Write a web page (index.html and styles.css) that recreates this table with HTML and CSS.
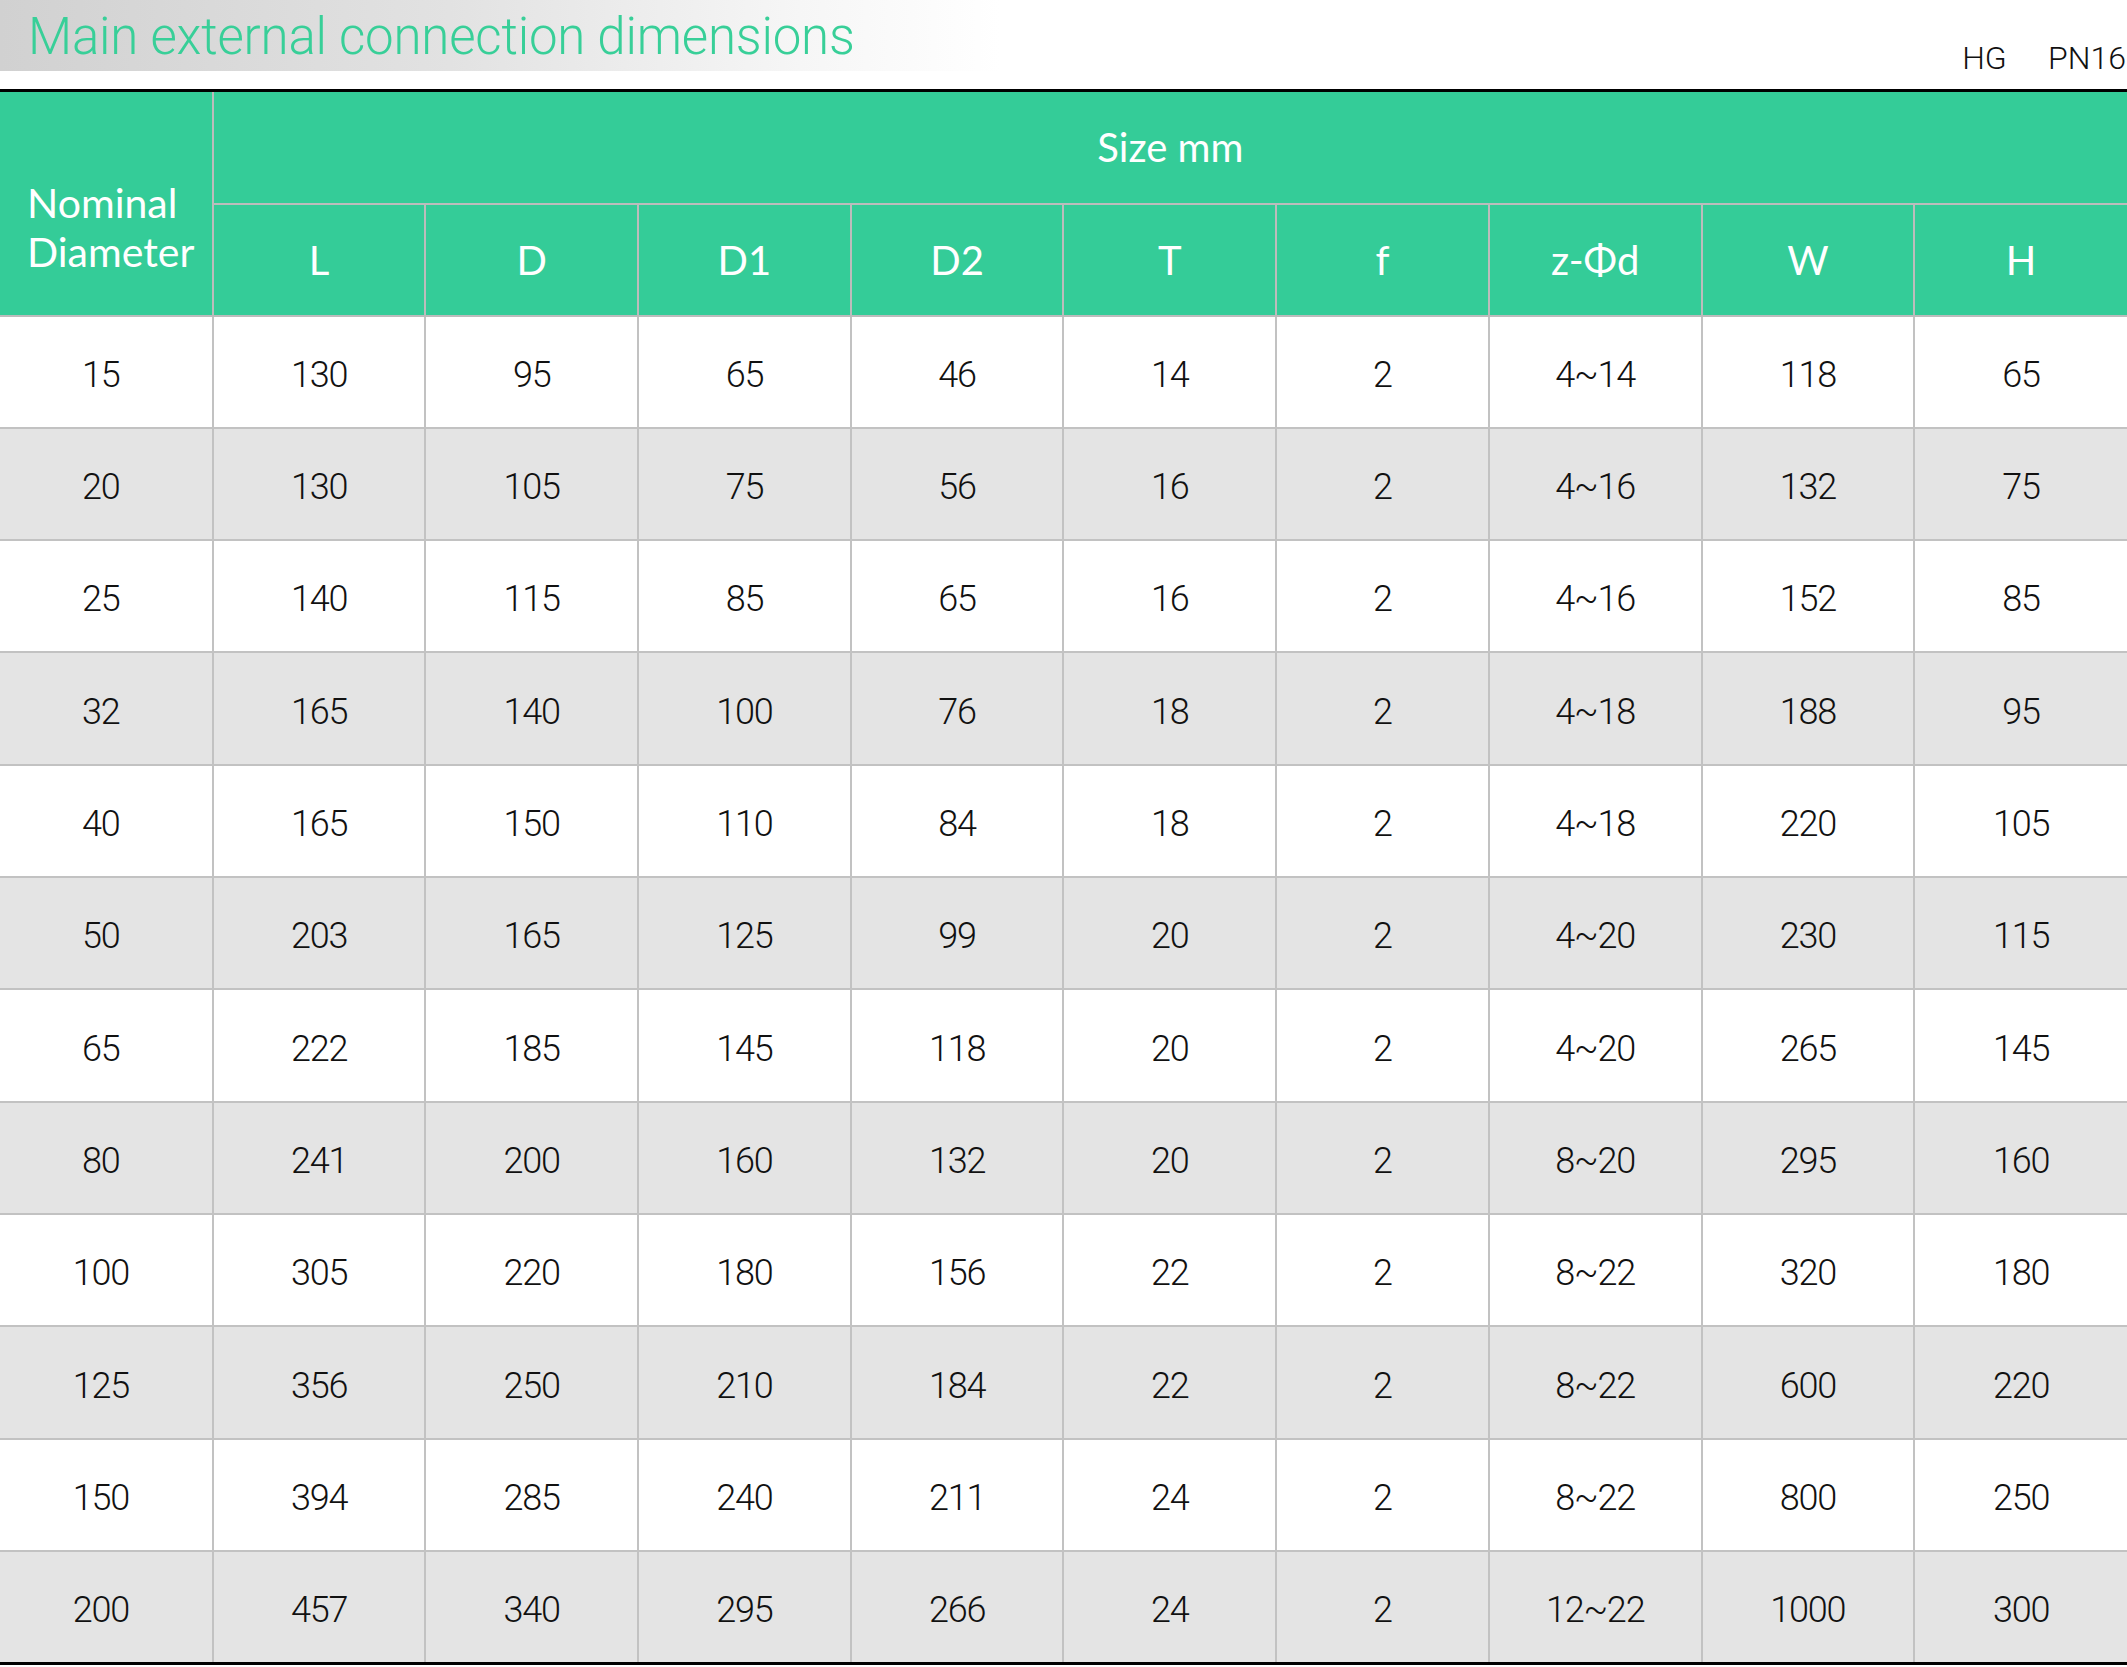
FILE: index.html
```html
<!DOCTYPE html>
<html lang="en">
<head>
<meta charset="utf-8">
<title>Main external connection dimensions</title>
<link rel="stylesheet" href="styles.css">
</head>
<body>
<div class="page">
  <header class="topbar">
    <div class="banner"><h1 class="title">Main external connection dimensions</h1></div>
    <div class="std">HG&nbsp;&nbsp;&nbsp;PN16</div>
  </header>
  <table class="dims">
    <colgroup>
      <col><col><col><col><col><col><col><col><col><col>
    </colgroup>
    <thead>
      <tr class="h1">
        <th class="nd" rowspan="2">Nominal<br>Diameter</th>
        <th colspan="9">Size mm</th>
      </tr>
      <tr class="h2">
        <th>L</th><th>D</th><th>D1</th><th>D2</th><th>T</th><th>f</th><th>z-Φd</th><th>W</th><th>H</th>
      </tr>
    </thead>
    <tbody>
      <tr><td>15</td><td>130</td><td>95</td><td>65</td><td>46</td><td>14</td><td>2</td><td>4~14</td><td>118</td><td>65</td></tr>
      <tr><td>20</td><td>130</td><td>105</td><td>75</td><td>56</td><td>16</td><td>2</td><td>4~16</td><td>132</td><td>75</td></tr>
      <tr><td>25</td><td>140</td><td>115</td><td>85</td><td>65</td><td>16</td><td>2</td><td>4~16</td><td>152</td><td>85</td></tr>
      <tr><td>32</td><td>165</td><td>140</td><td>100</td><td>76</td><td>18</td><td>2</td><td>4~18</td><td>188</td><td>95</td></tr>
      <tr><td>40</td><td>165</td><td>150</td><td>110</td><td>84</td><td>18</td><td>2</td><td>4~18</td><td>220</td><td>105</td></tr>
      <tr><td>50</td><td>203</td><td>165</td><td>125</td><td>99</td><td>20</td><td>2</td><td>4~20</td><td>230</td><td>115</td></tr>
      <tr><td>65</td><td>222</td><td>185</td><td>145</td><td>118</td><td>20</td><td>2</td><td>4~20</td><td>265</td><td>145</td></tr>
      <tr><td>80</td><td>241</td><td>200</td><td>160</td><td>132</td><td>20</td><td>2</td><td>8~20</td><td>295</td><td>160</td></tr>
      <tr><td>100</td><td>305</td><td>220</td><td>180</td><td>156</td><td>22</td><td>2</td><td>8~22</td><td>320</td><td>180</td></tr>
      <tr><td>125</td><td>356</td><td>250</td><td>210</td><td>184</td><td>22</td><td>2</td><td>8~22</td><td>600</td><td>220</td></tr>
      <tr><td>150</td><td>394</td><td>285</td><td>240</td><td>211</td><td>24</td><td>2</td><td>8~22</td><td>800</td><td>250</td></tr>
      <tr><td>200</td><td>457</td><td>340</td><td>295</td><td>266</td><td>24</td><td>2</td><td>12~22</td><td>1000</td><td>300</td></tr>
    </tbody>
  </table>
</div>
</body>
</html>
```
FILE: styles.css
```css
html, body {
  margin: 0;
  padding: 0;
  background: #ffffff;
}

.page {
  width: 2127px;
}

.topbar {
  display: flex;
  justify-content: space-between;
  align-items: flex-end;
  height: 89px;
}

.banner {
  align-self: flex-start;
  width: 1000px;
  height: 71px;
  background: linear-gradient(to right, #d1d1d1 0%, #e2e2e2 45%, #f6f6f6 80%, #ffffff 100%);
  display: flex;
  align-items: center;
}

.title {
  margin: 0 0 0 28px;
  font-family: Roboto, "Liberation Sans", Arial, sans-serif;
  font-weight: 300;
  font-size: 51px;
  letter-spacing: -0.2px;
  color: #38cf98;
  white-space: nowrap;
  line-height: 1;
  padding-top: 2px;
}

.std {
  font-family: Roboto, "Liberation Sans", Arial, sans-serif;
  font-weight: 300;
  font-size: 32px;
  color: #111111;
  line-height: 1;
  padding-bottom: 15px;
  padding-right: 1px;
  word-spacing: 6px;
}

.dims {
  width: 2127px;
  table-layout: fixed;
  border-collapse: collapse;
  border-top: 3px solid #000;
  border-bottom: 3px solid #000;
}

.dims col {
  width: 10%;
}

.dims th {
  background: #34cc98;
  color: #ffffff;
  font-family: Lato, "Noto Sans", sans-serif;
  font-weight: normal;
  font-size: 40px;
  border: 2px solid #bcbcbc;
  padding: 0;
  text-align: center;
  vertical-align: middle;
}

.dims tr.h1 th {
  border-top: 3px solid #000;
}

.dims .h1 {
  height: 113px;
}

.dims .h2 {
  height: 112px;
}

.dims th.nd {
  text-align: left;
  padding: 48px 0 0 27px;
  line-height: 49px;
  font-size: 41px;
  border-left: none;
}

.dims td {
  height: 104.33px;
  padding: 6px 0 0 0;
  border: 2px solid #c2c2c2;
  text-align: center;
  vertical-align: middle;
  font-family: Roboto, "Liberation Sans", Arial, sans-serif;
  font-weight: 300;
  font-size: 36px;
  letter-spacing: -1.2px;
  color: #111111;
}

.dims td:first-child {
  border-left: none;
  padding-right: 10px;
}

.dims th:last-child,
.dims td:last-child {
  border-right: none;
}

.dims tbody tr:nth-child(even) td {
  background: #e4e4e4;
}

.dims tbody tr:last-child td {
  border-bottom: 3px solid #000;
}
```
